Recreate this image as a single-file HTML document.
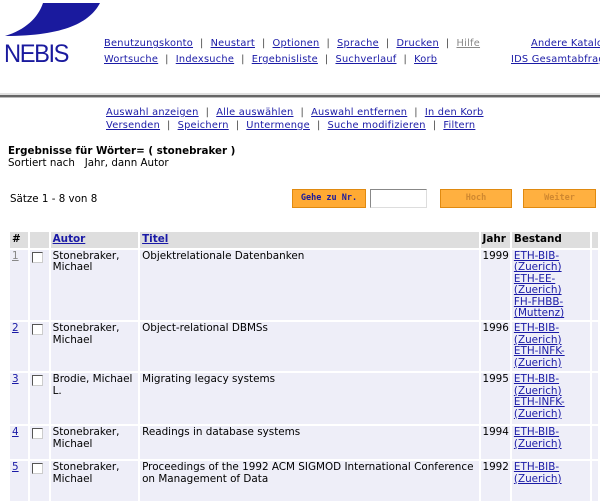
<!DOCTYPE html>
<html><head><meta charset="utf-8"><style>
body{margin:0;width:600px;height:487px;overflow:hidden;background:#fff;font-family:"DejaVu Sans","Liberation Sans",sans-serif;font-size:10.3px;color:#000;position:relative}
a{color:#1a1aa6;text-decoration:underline}
.a{position:absolute;white-space:nowrap}
.nav{font-size:9.8px;letter-spacing:0.25px}
.nav span{color:#444;margin:0 7px}
.btn{position:absolute;top:189px;height:19px;background:#ffaa33;border:1px solid #e08a10;box-sizing:border-box;font-family:"DejaVu Sans Mono",monospace;font-size:8.5px;font-weight:bold;text-align:center;line-height:17px}
table{position:absolute;left:8px;top:230px;border-collapse:separate;border-spacing:2px;font-size:10.4px;line-height:11.4px}
td{background:#eeeef8;vertical-align:top;padding:1px 2px 1px}
th{background:#dedede;text-align:left;padding:1px 2px;font-weight:bold;height:14px}
.cb{display:inline-block;width:9px;height:9px;border:1px solid #555;border-right-color:#ccc;border-bottom-color:#ccc;background:#fff;margin-top:1px}
</style></head><body>
<svg class="a" style="left:0;top:0" width="110" height="70">
<path d="M43 3 L100 3 C90 22 65 36 5 36 C25 30 38 18 43 3Z" fill="#1a1a9e"/>
<text x="4" y="62" font-family="Liberation Sans,sans-serif" font-size="25" fill="#1a1a9e" letter-spacing="-1.5" textLength="64" lengthAdjust="spacingAndGlyphs">NEBIS</text>
</svg>
<div class="a nav" style="left:104px;top:38px"><a>Benutzungskonto</a><span>|</span><a>Neustart</a><span>|</span><a>Optionen</a><span>|</span><a>Sprache</a><span>|</span><a>Drucken</a><span>|</span><a style="color:#888">Hilfe</a></div>
<div class="a nav" style="left:104px;top:54px"><a>Wortsuche</a><span>|</span><a>Indexsuche</a><span>|</span><a>Ergebnisliste</a><span>|</span><a>Suchverlauf</a><span>|</span><a>Korb</a></div>
<div class="a nav" style="left:531px;top:38px"><a>Andere Kataloge</a></div>
<div class="a nav" style="left:511px;top:54px"><a>IDS Gesamtabfrage</a></div>
<div class="a" style="left:0;top:93px;width:600px;height:2px;background:#e0e0e0"></div>
<div class="a" style="left:0;top:95px;width:600px;height:2px;background:#666"></div>
<div class="a" style="left:0;top:97px;width:600px;height:1px;background:#bbb"></div>
<div class="a nav" style="left:106px;top:107px"><a>Auswahl anzeigen</a><span>|</span><a>Alle auswählen</a><span>|</span><a>Auswahl entfernen</a><span>|</span><a>In den Korb</a></div>
<div class="a nav" style="left:106px;top:120px"><a>Versenden</a><span>|</span><a>Speichern</a><span>|</span><a>Untermenge</a><span>|</span><a>Suche modifizieren</a><span>|</span><a>Filtern</a></div>
<div class="a" style="left:8px;top:145px;font-weight:bold">Ergebnisse für Wörter= ( stonebraker )</div>
<div class="a" style="left:8px;top:157px">Sortiert nach &nbsp; Jahr, dann Autor</div>
<div class="a" style="left:10px;top:193px">Sätze 1 - 8 von 8</div>
<div class="btn" style="left:292px;width:74px;color:#1a1a9e">Gehe zu Nr.</div>
<div class="a" style="left:370px;top:189px;width:57px;height:19px;box-sizing:border-box;border:1px solid #888;border-right-color:#ddd;border-bottom-color:#ddd;background:#fff"></div>
<div class="btn" style="left:440px;width:72px;color:#d08830;background:#ffb040">Hoch</div>
<div class="btn" style="left:523px;width:73px;color:#d08830;background:#ffb040">Weiter</div>
<table>
<tr><th style="width:15px">#</th><th style="width:15px"></th><th style="width:86px"><a>Autor</a></th><th style="width:336px"><a>Titel</a></th><th style="width:26px;padding:1px 1px">Jahr</th><th style="width:78px">Bestand</th><th style="width:2px"></th></tr>
<tr style="height:70px"><td><a style="color:#888">1</a></td><td><span class="cb"></span></td><td>Stonebraker,<br>Michael</td><td>Objektrelationale Datenbanken</td><td style="padding:1px 1px">1999</td><td><a>ETH-BIB-<br>(Zuerich)<br>ETH-EE-<br>(Zuerich)<br>FH-FHBB-<br>(Muttenz)</a></td><td></td></tr>
<tr style="height:49px"><td><a>2</a></td><td><span class="cb"></span></td><td>Stonebraker,<br>Michael</td><td>Object-relational DBMSs</td><td style="padding:1px 1px">1996</td><td><a>ETH-BIB-<br>(Zuerich)<br>ETH-INFK-<br>(Zuerich)</a></td><td></td></tr>
<tr style="height:51px"><td><a>3</a></td><td><span class="cb"></span></td><td>Brodie, Michael<br>L.</td><td>Migrating legacy systems</td><td style="padding:1px 1px">1995</td><td><a>ETH-BIB-<br>(Zuerich)<br>ETH-INFK-<br>(Zuerich)</a></td><td></td></tr>
<tr style="height:33px"><td><a>4</a></td><td><span class="cb"></span></td><td>Stonebraker,<br>Michael</td><td>Readings in database systems</td><td style="padding:1px 1px">1994</td><td><a>ETH-BIB-<br>(Zuerich)</a></td><td></td></tr>
<tr style="height:40px"><td><a>5</a></td><td><span class="cb"></span></td><td>Stonebraker,<br>Michael</td><td style="white-space:nowrap">Proceedings of the 1992 ACM SIGMOD International Conference<br>on Management of Data</td><td style="padding:1px 1px">1992</td><td><a>ETH-BIB-<br>(Zuerich)</a></td><td></td></tr>
</table>
</body></html>
